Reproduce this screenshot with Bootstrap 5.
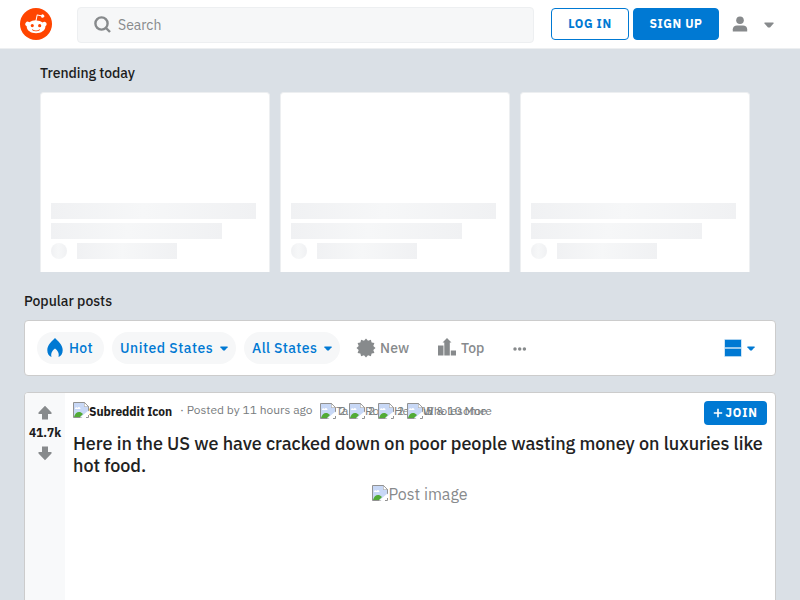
<!DOCTYPE html>
<html lang="en">
<head>
<meta charset="utf-8">
<meta name="viewport" content="width=device-width, initial-scale=1">
<title>Popular posts</title>
<link rel="stylesheet" href="https://cdn.jsdelivr.net/npm/bootstrap@5.3.0/dist/css/bootstrap.min.css">
<style>
body{background:#dae0e6;font-family:"IBM Plex Sans","Open Sans","Noto Sans",sans-serif;color:#1c1c1c;height:600px;overflow:hidden;font-size:14px;line-height:18px}
svg{display:block;flex:none}
.topbar{height:49px;border-bottom:1px solid #edeff1;padding:0 26px 0 20px}
.searchbox{width:457px;height:36px;margin:2px 0 0 25px;background:#f6f7f8;border:1px solid #edeff1;border-radius:4px;padding-left:16px;color:#878a8c}
.searchbox span{font-size:14px;margin-left:7px}
.act{height:32px;font-size:12px;font-weight:700;letter-spacing:.6px;padding:0;border-radius:4px;border:1px solid #0079d3;line-height:30px}
.act-line{width:78px;color:#0079d3;margin-left:17px}
.act-fill{width:86px;color:#fff;background:#0079d3;margin-left:4px}
.heading{font-size:14px;font-weight:500;line-height:18px}
.trend{width:230px;height:180px;background:#fff;border:1px solid #edeff1;border-bottom:0;border-radius:4px 4px 0 0;padding:110px 10px 0}
.sk{height:16px;background:linear-gradient(90deg,#f0f1f3,#f6f7f8 45%,#f0f1f3);margin-bottom:4px}
.w1{width:205px}.w2{width:171px}.w3{width:100px;margin-left:10px}.w0{width:16px;border-radius:50%}
.panel{background:#fff;border:1px solid #ccc;border-radius:4px}
.sortbar{height:56px;padding:0 20px 0 12px}
.pill{height:32px;border-radius:16px;background:#f6f7f8;color:#0079d3;font-weight:500;letter-spacing:.5px}
.grey{color:#878a8c;font-weight:500;letter-spacing:.2px}
.post{height:230px;overflow:hidden}
.votes{width:40px;background:#f8f9fa;padding-top:12px;flex:none}
.score{font-size:12px;font-weight:700;line-height:16px}
.meta{font-size:12px;line-height:16px;height:24px;color:#787c7e}
.srname{color:#1c1c1c;font-weight:700;letter-spacing:-.07px}
.award{width:29px;height:16px;white-space:nowrap;flex:none}
.award b{position:absolute;left:16px;top:0;font-weight:400}
.award i{position:absolute;left:19px;top:0;font-style:normal}
.join{width:63px;height:24px;background:#0079d3;color:#fff;font-size:12px;font-weight:700;letter-spacing:.8px;border-radius:4px;padding:0;border:0}
.title{font-size:18px;font-weight:500;line-height:22px;margin:8px 0 0;color:#222;white-space:nowrap;letter-spacing:-.045px}
.alt{font-size:16px;line-height:20px;color:#878a8c;margin-top:7px}
</style>
<script src="https://cdn.jsdelivr.net/npm/bootstrap@5.3.0/dist/js/bootstrap.bundle.min.js"></script>
</head>
<body>
<svg width="0" height="0" class="position-absolute"><defs>
<symbol id="broken" viewBox="0 0 16 16"><path d="M.5 .5h11l4 4v5l-6 6H.5z" fill="#c8d8f6"/><path d="M2 7c0-2 2-2 2.500-1 1-2 3-1 3 1z" fill="#fff"/><path d="M1 15c1-4 4-6 7-4.500l2 1.500-3 3z" fill="#52ab36"/><path d="M9 15.500H.5V.5h11l4 4V9M11.500 .5v4h4M15.500 13v2.500H13" fill="none" stroke="#929292"/><path d="M11.500 1v3.500H15z" fill="#fff"/><path d="M7 15.500l8.500-7v3l-5 4z" fill="#fff"/></symbol>
<symbol id="caret" viewBox="0 0 10 6"><path d="M.5 .5h9v1L6 5.500H4L.5 1.500z" fill="currentColor"/></symbol>
</defs></svg>
<header class="topbar bg-white d-flex align-items-center">
<svg width="32" height="32" viewBox="0 0 20 20"><circle cx="10" cy="10" r="10" fill="#ff4500"/><path d="M16.670 10a1.460 1.460 0 0 0-2.470-1 7.120 7.120 0 0 0-3.850-1.230l.65-3.120 2.140.45a1 1 0 1 0 .13-.61l-2.450-.49a.31.31 0 0 0-.37.24l-.74 3.470a7.140 7.140 0 0 0-3.900 1.230 1.460 1.460 0 1 0-1.610 2.390 2.870 2.870 0 0 0 0 .44c0 2.240 2.610 4.060 5.830 4.060s5.830-1.820 5.830-4.060a2.870 2.870 0 0 0 0-.44A1.460 1.460 0 0 0 16.670 10zm-10 1a1 1 0 1 1 2 0 1 1 0 0 1-2 0zm5.810 2.750a3.840 3.840 0 0 1-2.470.77 3.840 3.840 0 0 1-2.470-.77.27.27 0 0 1 .38-.38A3.270 3.270 0 0 0 10 14a3.280 3.280 0 0 0 2.090-.61.270.270 0 0 1 .39.36zm-.18-1.710a1 1 0 1 1 0-2 1 1 0 0 1 0 2z" fill="#fff"/></svg>
<div class="searchbox d-flex align-items-center"><svg width="17" height="17" viewBox="0 0 17 17" fill="none" stroke="#878a8c" stroke-width="2.400" style="margin-top:-2px"><circle cx="7.500" cy="7.500" r="6.100"/><path d="M12 12l4 4"/></svg><span>Search</span></div>
<button class="btn act act-line">LOG IN</button><button class="btn act act-fill">SIGN UP</button>
<svg class="ms-auto" width="16" height="16" viewBox="0 0 16 16" fill="#878a8c"><circle cx="8" cy="4.200" r="3.800"/><path d="M.8 15.600v-2.300C.8 10.900 2.500 9.500 5 9.500h6c2.500 0 4.200 1.400 4.200 3.800v2.300z"/></svg>
<svg width="10" height="6" style="color:#878a8c;margin:1px 0 0 16px"><use href="#caret"/></svg>
</header>
<main>
<h2 class="heading mb-0" style="margin:15px 0 0 40px;letter-spacing:-.04px">Trending today</h2>
<section class="d-flex" style="gap:10px;margin:10px 0 0 40px">
<div class="trend"><div class="sk w1"></div><div class="sk w2"></div><div class="d-flex"><div class="sk w0"></div><div class="sk w3"></div></div></div>
<div class="trend"><div class="sk w1"></div><div class="sk w2"></div><div class="d-flex"><div class="sk w0"></div><div class="sk w3"></div></div></div>
<div class="trend"><div class="sk w1"></div><div class="sk w2"></div><div class="d-flex"><div class="sk w0"></div><div class="sk w3"></div></div></div>
</section>
<div class="px-4">
<h2 class="heading" style="margin:20px 0 10px">Popular posts</h2>
<nav class="panel sortbar d-flex align-items-center">
<div class="pill d-flex align-items-center" style="width:67px;padding-left:10px"><svg width="16" height="20" viewBox="0 0 16 20"><path d="M8 0C5 3 .3 7 .3 12c0 3.500 1.500 6 4.200 7-1-4 1-6.500 3.500-8.500 2.500 2 4.500 4.500 3.500 8.500 2.700-1 4.200-3.500 4.200-7C15.700 7 11 3 8 0z" fill="currentColor"/></svg><span style="margin-left:6px;letter-spacing:.3px">Hot</span></div>
<div class="pill ms-2 d-flex align-items-center justify-content-between px-2" style="width:124px"><span>United States</span><svg width="8" height="5"><use href="#caret"/></svg></div>
<div class="pill ms-2 d-flex align-items-center justify-content-between px-2" style="width:96px"><span style="letter-spacing:.4px">All States</span><svg width="8" height="5"><use href="#caret"/></svg></div>
<div class="grey d-flex align-items-center" style="margin-left:16px;width:82px"><svg width="20" height="20" viewBox="-10 -10 20 20" fill="currentColor"><circle r="7.300"/><path d="M0-9.500L2-7.300 4.900-8.300 5.600-5.600 8.400-4.900 7.300-2 9.500 0 7.300 2 8.400 4.900 5.600 5.600 4.900 8.300 2 7.300 0 9.500-2 7.300-4.900 8.300-5.600 5.600-8.400 4.900-7.300 2-9.500 0-7.300-2-8.400-4.900-5.600-5.600-4.900-8.300-2-7.300z"/></svg><span style="margin-left:4px">New</span></div>
<div class="grey d-flex align-items-center" style="width:75px"><svg width="18" height="18" viewBox="0 0 18 18" fill="currentColor" style="margin-top:-3px"><path d="M0 7.500h5.500v10H0zM6.300 17.500V4.500H4.500L9 0l4.500 4.500h-1.700v13zM12.800 12.500H18v5h-5.200z"/></svg><span style="margin-left:5px;letter-spacing:0">Top</span></div>
<svg width="14" height="4" viewBox="0 0 14 4" fill="#878a8c" style="margin-top:2px"><circle cx="2" cy="2" r="1.750"/><circle cx="6.700" cy="2" r="1.750"/><circle cx="11.400" cy="2" r="1.750"/></svg>
<div class="ms-auto d-flex align-items-center" style="color:#0079d3;gap:5px"><svg width="18" height="18" viewBox="0 0 18 18"><path fill="#99c9ed" d="M.5 .2h17v17.600H.5z"/><path fill="currentColor" d="M1 1h16v7H1zM1 10h16v7H1z"/></svg><svg width="8" height="5"><use href="#caret"/></svg></div>
</nav>
<article class="panel post d-flex" style="margin-top:16px">
<div class="votes d-flex flex-column align-items-center"><svg width="14" height="16" viewBox="0 0 14 16"><path d="M7 .8l6.500 6.700v1.500H10v5.500H4V9H.5V7.500z" fill="#878a8c"/></svg><span class="score" style="margin:4px 0 4px">41.7k</span><svg width="14" height="16" viewBox="0 0 14 16"><path d="M7 15.200L.5 8.500V7H4V1.500h6V7h3.500v1.500z" fill="#878a8c"/></svg></div>
<div style="padding:8px 8px 0;width:710px;flex:none">
<div class="d-flex">
<div class="meta d-flex align-items-center position-relative"><svg width="16" height="16" style="margin-top:-6px"><use href="#broken"/></svg><span class="srname" style="width:91px;margin-top:-2px">Subreddit Icon</span><span style="width:140px;margin-top:-6px">· Posted by 11 hours ago</span>
<div class="d-flex" style="margin-top:-4px"><span class="award position-relative"><svg width="16" height="16"><use href="#broken"/></svg><b>Ta</b><i>2</i></span><span class="award position-relative"><svg width="16" height="16"><use href="#broken"/></svg><b>Ro</b><i>2</i></span><span class="award position-relative"><svg width="16" height="16"><use href="#broken"/></svg><b>Helpful</b><i>2</i></span><span class="award position-relative"><svg width="16" height="16"><use href="#broken"/></svg><b>Wholesome</b><i>5 &amp; 10 More</i></span></div></div>
<button class="btn join ms-auto d-flex align-items-center justify-content-center"><svg width="10" height="10" viewBox="0 0 10 10" style="margin-right:2px"><path d="M5 .8v8.400M.8 5h8.400" stroke="#fff" stroke-width="1.600"/></svg>JOIN</button>
</div>
<h1 class="title">Here in the US we have cracked down on poor people wasting money on luxuries like<br>hot food.</h1>
<div class="alt d-flex justify-content-center"><svg width="16" height="16" style="margin-top:1px"><use href="#broken"/></svg><span>Post image</span></div>
</div>
</article>
</div>
</main>
</body>
</html>
